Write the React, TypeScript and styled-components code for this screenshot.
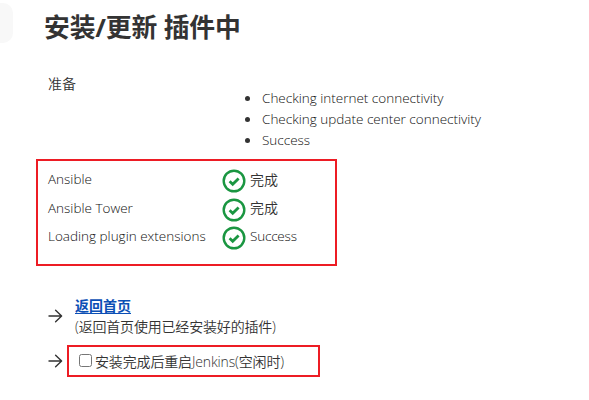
import React from "react";
import styled, { createGlobalStyle } from "styled-components";

const GlobalStyle = createGlobalStyle`
  * { box-sizing: border-box; }
  body {
    margin: 0;
    background: #fff;
    color: #333;
    font-family: "Open Sans", "Noto Sans CJK SC", sans-serif;
    font-size: 14px;
    font-weight: 350;
    line-height: 21px;
  }
`;

const Page = styled.main`
  display: flex;
  width: 589px;
  height: 400px;
  overflow: hidden;
`;

const SideTab = styled.div`
  flex: none;
  width: 13px;
  height: 40px;
  margin-top: 3px;
  border-radius: 0 10px 10px 0;
  background: #f8f8f8;
`;

const Content = styled.div`
  flex: 1;
  padding-left: 23px;
`;

const Title = styled.h1`
  margin: 8px 0 0 8px;
  height: 38px;
  font-size: 25.8px;
  letter-spacing: -0.15px;
  line-height: 38px;
  font-weight: 700;
  white-space: pre;
`;

const Text = styled.span<{ $spacing?: number }>`
  letter-spacing: ${(p) => p.$spacing ?? 0}px;
  white-space: nowrap;
`;

const LatinText = styled(Text)`
  color: #111;
  font-size: 13.5px;
`;

const Preparation = styled.section`
  display: grid;
  grid-template-columns: 174px 1fr;
  margin-top: 27px;
  padding-left: 12px;
  height: 86px;
`;

const Checks = styled.ul`
  margin: 15px 0 0;
  padding-left: 41px;
  list-style: none;
`;

const Check = styled.li`
  display: flex;
  align-items: center;
  height: 21px;
  margin-left: -18px;

  &::before {
    content: "";
    width: 5px;
    height: 5px;
    margin-right: 12px;
    border-radius: 50%;
    background: #333;
  }
`;

const Outlined = styled.div<{ $width: number; $height: number }>`
  width: ${(p) => p.$width}px;
  height: ${(p) => p.$height}px;
  border: 2px solid #ed1c24;
`;

const PluginPanel = styled(Outlined)`
  padding: 6px 0 0 10px;
`;

const PluginRow = styled.div`
  display: grid;
  grid-template-columns: 174px 24px 1fr;
  align-items: center;
  height: 28.6px;

  & > span {
    padding-bottom: 3px;
  }
  & > :last-child {
    margin-left: 4px;
  }
  & > ${Text}:last-child {
    padding-bottom: 4px;
  }
`;

const Links = styled.section`
  padding-left: 12px;
  margin-top: 29px;
`;

const LinkRow = styled.div`
  display: flex;
  align-items: center;
  height: 42px;
  gap: 12px;
`;

const LinkText = styled.div`
  display: flex;
  flex-direction: column;
`;

const HomeLink = styled.a`
  color: #0b4fb5;
  font-weight: 700;
  text-decoration: underline;
  text-underline-offset: 2px;
`;

const RestartRow = styled.div`
  display: flex;
  align-items: center;
  gap: 4px;
  margin-top: 8px;
`;

const RestartPanel = styled(Outlined)`
  display: flex;
  align-items: center;
  padding-left: 10px;
`;

const Checkbox = styled.input`
  appearance: none;
  width: 13px;
  height: 13px;
  margin: 0 3px 1px 0;
  border: 1px solid #767676;
  border-radius: 2.5px;
  background: #fff;
`;

const Icon = styled.svg`
  display: block;
  flex: none;
`;

const DoneIcon = () => (
  <Icon width="24" height="24" viewBox="0 0 24 24" fill="none" stroke="#1a9641">
    <circle cx="12" cy="12" r="10.3" strokeWidth="2.4" />
    <path d="M7.6 12.3l3.1 2.9 5.9-5.8" strokeWidth="2.8" />
  </Icon>
);

const ArrowIcon = () => (
  <Icon width="15" height="14" viewBox="0 0 15 14" fill="none" stroke="#333" strokeWidth="1.4" strokeLinecap="round" strokeLinejoin="round">
    <path d="M1 7h12.5M7.6 1.2L13.6 7 7.6 12.8" />
  </Icon>
);

const checks = [
  "Checking internet connectivity",
  "Checking update center connectivity",
  "Success",
];

const plugins = [
  { name: "Ansible", status: "完成" },
  { name: "Ansible Tower", status: "完成" },
  { name: "Loading plugin extensions", status: "Success" },
];

export default function App() {
  return (
    <>
      <GlobalStyle />
      <Page>
        <SideTab />
        <Content>
          <Title>安装/更新 插件中</Title>
          <Preparation>
            <Text>准备</Text>
            <Checks>
              {checks.map((label) => (
                <Check key={label}>
                  <LatinText>{label}</LatinText>
                </Check>
              ))}
            </Checks>
          </Preparation>
          <PluginPanel $width={301} $height={107}>
            {plugins.map((p) => (
              <PluginRow key={p.name}>
                <LatinText>{p.name}</LatinText>
                <DoneIcon />
                {p.status === "Success" ? (
                  <LatinText $spacing={-0.2}>{p.status}</LatinText>
                ) : (
                  <Text>{p.status}</Text>
                )}
              </PluginRow>
            ))}
          </PluginPanel>
          <Links>
            <LinkRow>
              <ArrowIcon />
              <LinkText>
                <HomeLink href="#">返回首页</HomeLink>
                <Text $spacing={-0.18}>(返回首页使用已经安装好的插件)</Text>
              </LinkText>
            </LinkRow>
            <RestartRow>
              <ArrowIcon />
              <RestartPanel $width={253} $height={32}>
                <Checkbox type="checkbox" id="restart" />
                <label htmlFor="restart">
                  <Text $spacing={-0.15}>安装完成后重启Jenkins(空闲时)</Text>
                </label>
              </RestartPanel>
            </RestartRow>
          </Links>
        </Content>
      </Page>
    </>
  );
}
